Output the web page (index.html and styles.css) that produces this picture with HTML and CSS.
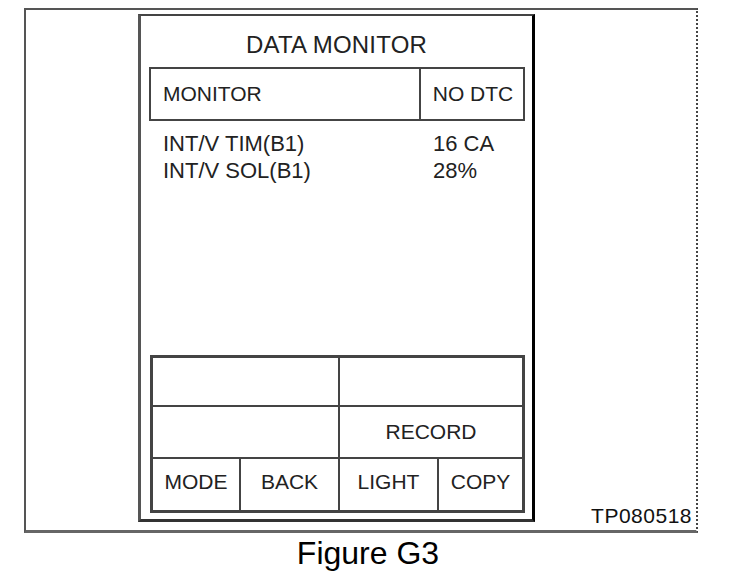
FILE: index.html
```html
<!DOCTYPE html>
<html>
<head>
<meta charset="utf-8">
<link rel="stylesheet" href="styles.css">
</head>
<body>
<div class="frame">
  <div class="device">
    <div class="title">DATA MONITOR</div>
    <div class="header">
      <div class="header-main">MONITOR</div>
      <div class="header-side">NO DTC</div>
    </div>
    <div class="data">
      <div class="label">INT/V TIM(B1)</div><div class="value">16 CA</div>
      <div class="label">INT/V SOL(B1)</div><div class="value">28%</div>
    </div>
    <div class="buttons">
      <div class="btn wide"></div>
      <div class="btn wide"></div>
      <div class="btn wide"></div>
      <div class="btn wide">RECORD</div>
      <div class="btn low">MODE</div>
      <div class="btn low">BACK</div>
      <div class="btn low">LIGHT</div>
      <div class="btn low">COPY</div>
    </div>
  </div>
  <div class="code">TP080518</div>
</div>
<div class="caption">Figure G3</div>
</body>
</html>
```
FILE: styles.css
```css
html, body {
  margin: 0;
  padding: 0;
  background: #fff;
}
body {
  font-family: "Liberation Sans", Arial, sans-serif;
  color: #222;
}
.frame {
  box-sizing: border-box;
  width: 674px;
  height: 525px;
  margin: 8px 0 0 24px;
  border-top: 2px solid #555;
  border-left: 2px solid #555;
  border-right: 2px dotted #444;
  border-bottom: 3px solid #666;
  padding: 4px 4px 8px 112px;
  display: flex;
  align-items: flex-end;
}
.device {
  box-sizing: border-box;
  width: 397px;
  height: 508px;
  border-top: 2px solid #444;
  border-left: 3px solid #555;
  border-right: 3px solid #000;
  border-bottom: 3px solid #333;
  display: flex;
  flex-direction: column;
}
.title {
  margin-top: 15px;
  font-size: 24px;
  line-height: 28px;
  text-align: center;
  letter-spacing: 0.2px;
}
.header {
  box-sizing: border-box;
  margin: 8px 7px 0 8px;
  height: 54px;
  border: 2px solid #444;
  display: flex;
  font-size: 21px;
}
.header-main {
  flex: 1;
  display: flex;
  align-items: center;
  padding-left: 12px;
  border-right: 2px solid #444;
}
.header-side {
  width: 100px;
  display: flex;
  align-items: center;
  justify-content: center;
  padding-left: 2px;
}
.data {
  margin: 9px 0 0 22px;
  display: grid;
  grid-template-columns: 270px auto;
  font-size: 22px;
  line-height: 27px;
}
.buttons {
  margin: auto 7px 6px 9px;
  padding: 3px;
  background: #444;
  display: grid;
  grid-template-columns: 86px 97px 97px 83px;
  grid-template-rows: 47px 50px 51px;
  gap: 2px;
  font-size: 21px;
}
.btn {
  background: #fff;
  display: flex;
  align-items: center;
  justify-content: center;
}
.btn.wide {
  grid-column: span 2;
}
.btn.low {
  padding-bottom: 6px;
}
.code {
  margin-left: auto;
  margin-bottom: -4px;
  font-size: 21px;
  line-height: 21px;
  letter-spacing: 0.5px;
  color: #111;
}
.caption {
  margin-top: 2px;
  text-align: center;
  font-size: 32px;
  line-height: 37px;
  color: #000;
}
```
